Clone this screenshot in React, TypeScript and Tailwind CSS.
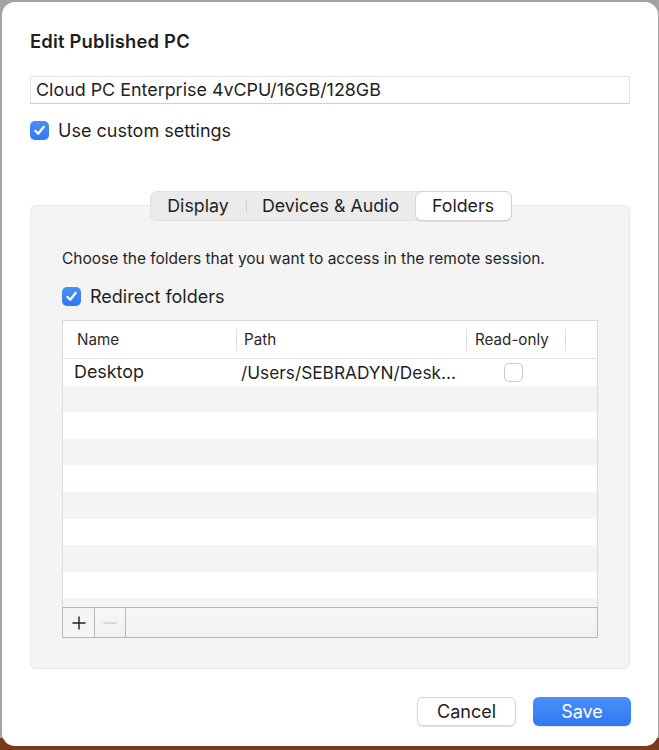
import React from 'react';

const font = { fontFamily: 'Inter, "Liberation Sans", sans-serif' };

function Check({ checked }: { checked: boolean }) {
  if (!checked) {
    return <div className="w-[19px] h-[19px] rounded-[5px] border border-[#c9c9c9] bg-white" />;
  }
  return (
    <div className="w-[19px] h-[19px] rounded-[5px] bg-gradient-to-b from-[#4a90f8] to-[#2f78f2] flex items-center justify-center">
      <svg width="13" height="13" viewBox="0 0 13 13" fill="none">
        <path d="M2.3 6.8 L5.2 9.8 L10.8 2.8" stroke="white" strokeWidth="2.2" strokeLinecap="round" strokeLinejoin="round" />
      </svg>
    </div>
  );
}

export default function App() {
  const rows = Array.from({ length: 10 });
  return (
    <div
      className="w-[659px] h-[750px] overflow-hidden bg-[linear-gradient(to_bottom,#a3a3a3_0px,#a3a3a3_738px,#7a3a1c_738px)] pl-[2px] pt-[2px]"
      style={font}
    >
      <div className="w-[656px] h-[744px] bg-white rounded-[13px] flex flex-col px-[28px] pt-[28px] text-[#1f1f1f]">
        {/* Title */}
        <h1 className="text-[18.4px] leading-[22px] font-semibold tracking-[0.2px]">Edit Published PC</h1>

        {/* Name field */}
        <div className="mt-[24px] w-[600px] h-[28px] border border-[#e2e2e2] border-b-[#cfcfcf] flex items-center px-[5px] text-[17.9px]">
          Cloud PC Enterprise 4vCPU/16GB/128GB
        </div>

        <div className="mt-[17px] flex items-center gap-[9px]">
          <Check checked />
          <span className="text-[18px] leading-[19px]">Use custom settings</span>
        </div>

        {/* Tabs + group box */}
        <div className="mt-[51px] w-[600px] flex flex-col">
          <div className="relative z-10 flex justify-center h-[30px]">
            <div className="ml-[1px] flex items-stretch rounded-[7px] bg-[#ebebeb] border border-[#e0e0e0] text-[17.8px]">
              <div className="w-[95px] flex items-center justify-center">Display</div>
              <div className="w-px my-[8px] bg-[#cfcfcf]" />
              <div className="w-[168px] flex items-center justify-center">Devices &amp; Audio</div>
              <div className="w-[97px] -my-px -mr-px flex items-center justify-center bg-white rounded-[7px] border border-[#d4d4d4] shadow-[0_1px_1px_rgba(0,0,0,0.08)]">
                Folders
              </div>
            </div>
          </div>
          <div className="-mt-[16px] h-[464px] rounded-[6px] bg-[#f4f4f4] border border-[#e7e7e7] px-[31px] pt-[43px]">
            <p className="text-[15.5px] leading-[20px] text-[#262626]">
              Choose the folders that you want to access in the remote session.
            </p>
            <div className="mt-[18px] flex items-center gap-[9px]">
              <Check checked />
              <span className="text-[18px] leading-[19px]">Redirect folders</span>
            </div>

            {/* Table */}
            <div className="mt-[14px] w-[536px] h-[287px] overflow-hidden bg-white border border-[#dadada] border-b-0 flex flex-col">
              <div className="h-[38px] shrink-0 flex items-center border-b border-[#e3e3e3] text-[15.2px] text-[#2a2a2a] pt-[1px]">
                <div className="w-[173px] pl-[14px]">Name</div>
                <div className="w-px h-[22px] bg-[#dcdcdc]" />
                <div className="w-[229px] pl-[7px]">Path</div>
                <div className="w-px h-[22px] bg-[#dcdcdc]" />
                <div className="w-[98px] pl-[8px]">Read-only</div>
                <div className="w-px h-[22px] bg-[#dcdcdc]" />
              </div>
              {rows.map((_, i) => (
                <div
                  key={i}
                  className={`h-[26.6px] shrink-0 flex items-center text-[17.9px] ${i % 2 === 0 ? 'bg-white' : 'bg-[#f3f4f4]'}`}
                >
                  {i === 0 && (
                    <>
                      <div className="w-[174px] pl-[11px] pt-[1px]">Desktop</div>
                      <div className="w-[230px] pl-[4px] pt-[1px] whitespace-nowrap text-[17.3px]">/Users/SEBRADYN/Desk...</div>
                      <div className="w-[99px] flex justify-center">
                        <div className="-ml-[6px]">
                          <Check checked={false} />
                        </div>
                      </div>
                    </>
                  )}
                </div>
              ))}
            </div>
            <div className="w-[536px] h-[31px] flex border border-[#b8b8b8] bg-gradient-to-b from-[#f7f7f7] to-[#f1f1f1]">
              <div className="w-[32px] border-r border-[#b8b8b8] flex items-center justify-center bg-[#f5f5f5]">
                <svg width="16" height="16" viewBox="0 0 16 16">
                  <path d="M8 1.5 V14.5 M1.5 8 H14.5" stroke="#1f1f1f" strokeWidth="1.4" />
                </svg>
              </div>
              <div className="w-[31px] border-r border-[#b8b8b8] flex items-center justify-center">
                <svg width="16" height="16" viewBox="0 0 16 16">
                  <path d="M1.5 8 H14.5" stroke="#c4c4c4" strokeWidth="1.2" />
                </svg>
              </div>
              <div className="flex-1" />
            </div>
          </div>
        </div>

        {/* Buttons */}
        <div className="mt-[28px] w-[601px] flex justify-end gap-[17px]">
          <button className="w-[99px] h-[29px] rounded-[6px] bg-white border border-[#d8d8d8] shadow-[0_1px_1px_rgba(0,0,0,0.12)] text-[18px] text-[#222]">
            Cancel
          </button>
          <button className="w-[98px] h-[29px] rounded-[6px] bg-gradient-to-b from-[#4b90f8] to-[#2f77f2] text-[18px] text-white shadow-[0_1px_1px_rgba(0,0,0,0.1)]">
            Save
          </button>
        </div>
      </div>
    </div>
  );
}
